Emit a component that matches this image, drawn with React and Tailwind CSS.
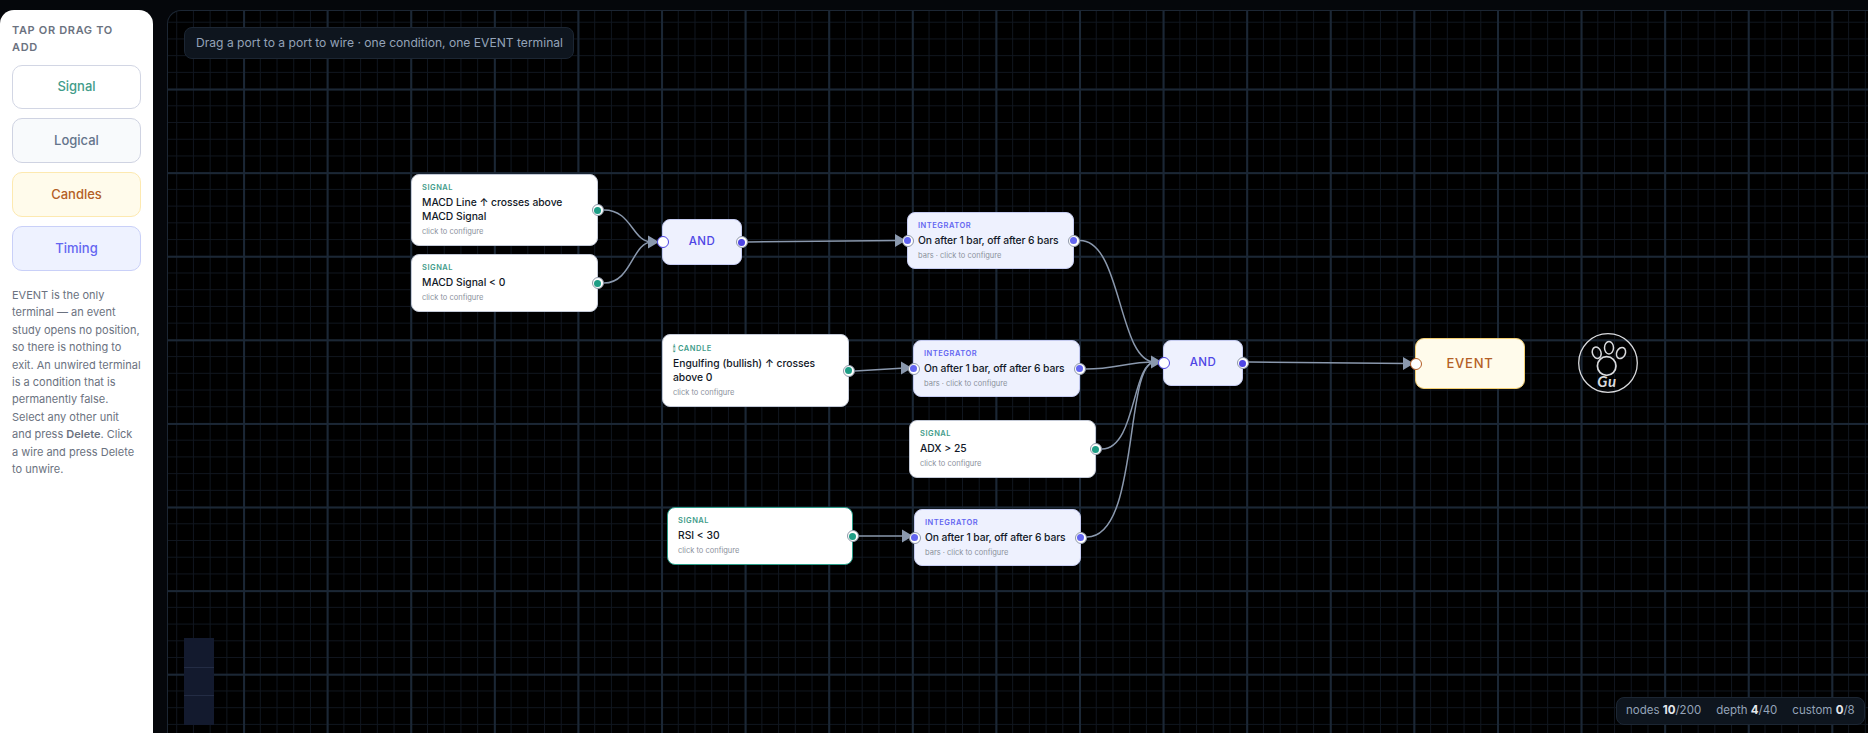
import React from "react";

const FONT = "font-['Inter','Liberation_Sans',sans-serif]";

const WIRES = [
  "M604 210 C 632 210, 632 242, 652 242",
  "M604 283 C 632 283, 632 242, 652 242",
  "M748 242 L 899 240.5",
  "M855 371 L 905 368",
  "M859 536 L 906 536",
  "M1080 240.5 C 1122 240.5, 1118 362, 1155 362",
  "M1086 369 C 1116 369, 1126 362, 1155 362",
  "M1102 449 C 1136 449, 1132 362, 1155 362",
  "M1087 537 C 1140 537, 1124 362, 1155 362",
  "M1249 362 L 1407 363.5",
];

const ARROWS = [
  "M659 242 L 648 235.5 L 648 248.5 Z",
  "M906 240.5 L 895 234 L 895 247 Z",
  "M912 368 L 901 361.5 L 901 374.5 Z",
  "M913 536 L 902 529.5 L 902 542.5 Z",
  "M1162 362 L 1151 355.5 L 1151 368.5 Z",
  "M1414 363.5 L 1403 357 L 1403 370 Z",
];

const SIGNAL = {
  card: "bg-white border-[#c3c9d6]",
  tag: "text-[#3f9c8a]",
  dot: "bg-[#1f9e86]",
  title: "text-[10.3px]",
};
const TIMING = {
  card: "bg-[#eef1fe] border-[#c5cbf0]",
  tag: "text-[#6366f1]",
  dot: "bg-[#6366f1]",
  title: "text-[10.3px] tracking-[-0.01em] whitespace-nowrap",
};

const NODES = [
  { x: 411, y: 174, w: 187, h: 72, kind: SIGNAL, tag: "Signal", title: "MACD Line ↑ crosses above MACD Signal", sub: "click to configure" },
  { x: 411, y: 254, w: 187, h: 58, kind: SIGNAL, tag: "Signal", title: "MACD Signal < 0", sub: "click to configure" },
  { x: 662, y: 334, w: 187, h: 73, kind: SIGNAL, tag: "🕯 Candle", title: "Engulfing (bullish) ↑ crosses above 0", sub: "click to configure" },
  { x: 909, y: 420, w: 187, h: 58, kind: SIGNAL, tag: "Signal", title: "ADX > 25", sub: "click to configure" },
  { x: 667, y: 507, w: 186, h: 58, kind: SIGNAL, tag: "Signal", title: "RSI < 30", sub: "click to configure", selected: true },
  { x: 907, y: 212, w: 167, h: 57, kind: TIMING, tag: "Integrator", title: "On after 1 bar, off after 6 bars", sub: "bars · click to configure", input: true },
  { x: 913, y: 340, w: 167, h: 57, kind: TIMING, tag: "Integrator", title: "On after 1 bar, off after 6 bars", sub: "bars · click to configure", input: true },
  { x: 914, y: 509, w: 167, h: 57, kind: TIMING, tag: "Integrator", title: "On after 1 bar, off after 6 bars", sub: "bars · click to configure", input: true },
];

function Port({ side, className }) {
  return (
    <span
      className={`absolute top-1/2 -translate-y-1/2 ${side === "left" ? "-left-[6.5px]" : "-right-[6.5px]"} flex h-[12px] w-[12px] items-center justify-center rounded-full border-[1.5px] border-[#8f98a8] bg-white`}
    >
      <span className={`h-[7px] w-[7px] shrink-0 rounded-full ${className}`} />
    </span>
  );
}

function InPort({ color }) {
  return <span className={`absolute top-1/2 -left-[6px] h-[12px] w-[12px] -translate-y-1/2 rounded-full border-[1.5px] bg-white ${color}`} />;
}

function Node({ node }) {
  const { x, y, w, h, kind } = node;
  const card = node.selected ? "bg-white border-[#2a9d88]" : kind.card;
  return (
    <div
      className={`absolute flex flex-col justify-center rounded-[8px] border-[1.5px] pl-[10px] pr-[8px] ${card}`}
      style={{ left: x, top: y, width: w, height: h }}
    >
      <div className={`text-[7.5px] leading-[11px] font-semibold uppercase tracking-[0.07em] ${kind.tag}`}>{node.tag}</div>
      <div className={`mt-[2px] leading-[14px] font-medium text-[#111827] ${kind.title}`}>{node.title}</div>
      <div className="mt-[3px] text-[7.5px] leading-[12px] text-[#8b919c]">{node.sub}</div>
      {node.input && <Port side="left" className={kind.dot} />}
      <Port side="right" className={kind.dot} />
    </div>
  );
}

function AndNode({ x, y }) {
  return (
    <div
      className="absolute flex h-[46px] w-[80px] items-center justify-center rounded-[8px] border-[1.5px] border-[#c5cbf0] bg-[#eef1fe] text-[11.5px] font-medium tracking-[0.04em] text-[#4f46e5]"
      style={{ left: x, top: y }}
    >
      AND
      <InPort color="border-[#4f46e5]" />
      <Port side="right" className="bg-[#4f46e5]" />
    </div>
  );
}

function PawLogo() {
  return (
    <svg className="absolute left-[1578px] top-[333px]" width="60" height="60" viewBox="0 0 60 60" fill="none" stroke="#d9dadd">
      <circle cx="30" cy="30" r="29.3" strokeWidth="1.3" />
      <ellipse cx="18.7" cy="19.7" rx="4.3" ry="5.8" strokeWidth="1.5" transform="rotate(-18 18.7 19.7)" />
      <ellipse cx="31" cy="14.7" rx="4.5" ry="6.2" strokeWidth="1.5" />
      <ellipse cx="43" cy="20" rx="4.3" ry="5.8" strokeWidth="1.5" transform="rotate(25 43 20)" />
      <circle cx="28.7" cy="33" r="9.3" strokeWidth="1.7" />
      <text x="29" y="54" textAnchor="middle" fontSize="15" fontWeight="700" letterSpacing="0.6" fill="#d9dadd" stroke="none" fontFamily="Lato, sans-serif" fontStyle="italic">Gu</text>
    </svg>
  );
}

const PALETTE = [
  { label: "Signal", cls: "h-[44px] bg-white border-[#d2d6e4] text-[#3f9c8a]" },
  { label: "Logical", cls: "h-[45px] bg-[#f8fafc] border-[#cfd3e2] text-[#64748b]" },
  { label: "Candles", cls: "h-[45px] bg-[#fffbeb] border-[#fde9b0] text-[#b45f26]" },
  { label: "Timing", cls: "h-[45px] bg-[#eef2ff] border-[#c9d0f8] text-[#6366f1]" },
];

export default function App() {
  return (
    <div className={`flex h-[733px] w-[1868px] gap-[14px] overflow-hidden bg-[#05070b] pt-[10px] ${FONT}`}>
      <aside className="w-[153px] shrink-0 rounded-t-[14px] bg-white px-[12px] pt-[12px]">
        <div className="text-[11px] leading-[17px] font-semibold uppercase tracking-[0.06em] text-[#6b7280]">Tap or drag to add</div>
        <div className="mt-[9px] flex flex-col gap-[9px]">
          {PALETTE.map((item) => (
            <div key={item.label} className={`flex items-center justify-center rounded-[10px] border text-[13px] font-medium ${item.cls}`}>
              {item.label}
            </div>
          ))}
        </div>
        <p className="mt-[16px] text-[11px] leading-[17.4px] text-[#6b7280]">
          EVENT is the only terminal — an event study opens no position, so there is nothing to exit. An unwired terminal is a condition that is permanently false. Select any other unit and press <b className="font-semibold">Delete</b>. Click a wire and press Delete to unwire.
        </p>
      </aside>

      <main className="relative flex-1 overflow-hidden rounded-tl-[14px] border-l border-t border-[#1c2633] bg-black">
        {/* grid */}
        <div className="absolute inset-0 bg-[linear-gradient(#1b2735_2px,transparent_2px),linear-gradient(90deg,#1b2735_2px,transparent_2px),linear-gradient(#10161f_1px,transparent_1px),linear-gradient(90deg,#10161f_1px,transparent_1px)] bg-[size:83.6px_83.6px,83.6px_83.6px,16.72px_16.72px,16.72px_16.72px] bg-[position:-8.5px_-6px,-8.5px_-6px,-8.5px_-6px,-8.5px_-6px]" />

        {/* canvas content is placed in page coords */}
        <div className="absolute -left-[168px] -top-[11px] h-[733px] w-[1868px]">
          <svg className="absolute inset-0" width="1868" height="733" fill="none">
            {WIRES.map((d) => (
              <path key={d} d={d} stroke="#8a98ad" strokeWidth="1.5" />
            ))}
            {ARROWS.map((d) => (
              <path key={d} d={d} fill="#8a98ad" />
            ))}
          </svg>

          {NODES.map((node) => (
            <Node key={`${node.x}-${node.y}`} node={node} />
          ))}
          <AndNode x={662} y={219} />
          <AndNode x={1163} y={340} />

          <div className="absolute left-[1415px] top-[338px] flex h-[51px] w-[110px] items-center justify-center rounded-[9px] border-[1.5px] border-[#f4cf72] bg-[#fffbeb] text-[13px] font-medium tracking-[0.06em] text-[#b45f26]">
            EVENT
            <InPort color="border-[#b45f26]" />
          </div>

          <PawLogo />

          <div className="absolute left-[184px] top-[27px] flex h-[32px] w-[390px] items-center whitespace-nowrap rounded-[8px] border border-[#1c2633] bg-[#0e151e] px-[11px] text-[12.1px] text-[#94a3b8]">
            Drag a port to a port to wire · one condition, one EVENT terminal
          </div>

          <div className="absolute left-[184px] top-[638px] flex h-[87px] w-[30px] flex-col justify-between bg-[#131a2e]">
            <div className="mt-[29px] h-px bg-[#232c44]" />
            <div className="mb-[29px] h-px bg-[#232c44]" />
          </div>

          <div className="absolute left-[1616px] top-[697px] flex h-[28px] w-[249px] items-center gap-[15px] rounded-[8px] border border-[#1c2633] bg-[#0e151e] px-[9px] text-[11.5px] text-[#94a3b8]">
            <span>nodes <b className="font-bold text-[#e5e7eb]">10</b>/200</span>
            <span>depth <b className="font-bold text-[#e5e7eb]">4</b>/40</span>
            <span>custom <b className="font-bold text-[#e5e7eb]">0</b>/8</span>
          </div>
        </div>
      </main>
    </div>
  );
}
